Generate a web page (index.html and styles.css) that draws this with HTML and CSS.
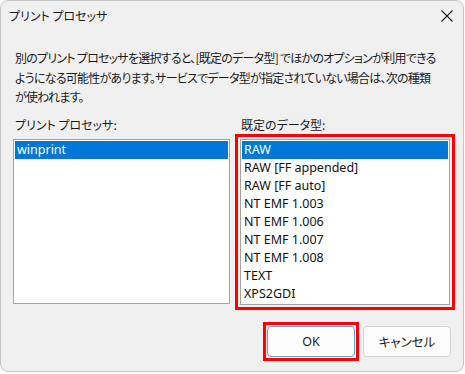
FILE: index.html
```html
<!DOCTYPE html>
<html lang="ja">
<head>
<meta charset="utf-8">
<title>プリント プロセッサ</title>
<link rel="stylesheet" href="styles.css">
</head>
<body>
<div class="win">
  <div class="titlebar">
    <span class="title">プリント プロセッサ</span>
    <span class="close" aria-label="閉じる">
      <svg width="12" height="12" viewBox="0 0 12 12"><path d="M0.5 0.5 L11.5 11.5 M11.5 0.5 L0.5 11.5" stroke="#1b1b1b" stroke-width="1.1" fill="none"/></svg>
    </span>
  </div>
  <p class="desc">別のプリント プロセッサを選択すると、[既定のデータ型] でほかのオプションが利用できる<br>ようになる可能性があります。サービスでデータ型が指定されていない場合は、次の種類<br>が使われます。</p>
  <div class="cols">
    <div class="col">
      <div class="label">プリント プロセッサ:</div>
      <div class="list list-left">
        <div class="item sel">winprint</div>
      </div>
    </div>
    <div class="col">
      <div class="label label-right">既定のデータ型:</div>
      <div class="hl hl-list">
        <div class="list list-right">
          <div class="item sel">RAW</div>
          <div class="item">RAW [FF appended]</div>
          <div class="item">RAW [FF auto]</div>
          <div class="item">NT EMF 1.003</div>
          <div class="item">NT EMF 1.006</div>
          <div class="item">NT EMF 1.007</div>
          <div class="item">NT EMF 1.008</div>
          <div class="item">TEXT</div>
          <div class="item">XPS2GDI</div>
        </div>
      </div>
    </div>
  </div>
  <div class="buttons">
    <div class="hl hl-btn"><button class="btn btn-default">OK</button></div>
    <button class="btn">キャンセル</button>
  </div>
</div>
</body>
</html>
```

FILE: styles.css
```css
* { box-sizing: border-box; }
html, body { margin: 0; padding: 0; background: #ffffff; }
body {
  font-family: "Noto Sans", "Noto Sans CJK JP", sans-serif;
  color: #1a1a1a;
}
.win {
  width: 464px;
  height: 372px;
  border: 1px solid #c6c6c6;
  border-radius: 8px;
  background: #f0f0f0;
  overflow: hidden;
}
.titlebar {
  height: 29px;
  display: flex;
  align-items: center;
  justify-content: space-between;
  padding: 0 10px 0 8px;
}
.title {
  font-family: "Noto Sans CJK JP", sans-serif;
  font-size: 12px;
  font-feature-settings: "palt";
  color: #1a1a1a;
}
.close { display: flex; width: 12px; height: 12px; }
.desc {
  margin: 18px 0 0 0;
  padding-left: 14px;
  font-family: "Noto Sans CJK JP", sans-serif;
  font-size: 12px;
  letter-spacing: -0.75px;
  line-height: 19.5px;
  font-feature-settings: "palt";
  white-space: nowrap;
}
.cols {
  display: grid;
  grid-template-columns: 217px 220px;
  column-gap: 5px;
  padding-left: 12px;
  margin-top: 9px;
}
.label {
  height: 18px;
  line-height: 18px;
  font-family: "Noto Sans CJK JP", sans-serif;
  font-size: 12px;
  font-feature-settings: "palt";
  padding-left: 2px;
}
.label-right { padding-left: 6px; }
.list {
  background: #ffffff;
  border: 1px solid #a3a3a3;
  padding: 1px;
}
.list-left { margin-top: 5px; height: 165px; }
.list-right { height: 166px; }
.hl {
  border: 3px solid #ff0000;
  padding: 2px;
  background: #f0f0f0;
}
.hl-list { height: 176px; }
.item {
  height: 18px;
  line-height: 18px;
  font-size: 12.5px;
  padding-left: 2px;
  white-space: nowrap;
  color: #111;
}
.item.sel { background: #0078d7; color: #ffffff; }
.buttons {
  display: flex;
  justify-content: flex-end;
  align-items: center;
  gap: 4px;
  padding-right: 12px;
  margin-top: 12px;
}
.hl-btn { padding: 1px; }
.btn {
  width: 88px;
  height: 31px;
  border: 1px solid #d3d3d3;
  border-radius: 4px;
  background: #fdfdfd;
  font-family: "Noto Sans", "Noto Sans CJK JP", sans-serif;
  font-size: 12.5px;
  font-feature-settings: "palt";
  color: #1a1a1a;
  padding: 0;
}
.btn-default { border-color: #5fa0d8; }
```
